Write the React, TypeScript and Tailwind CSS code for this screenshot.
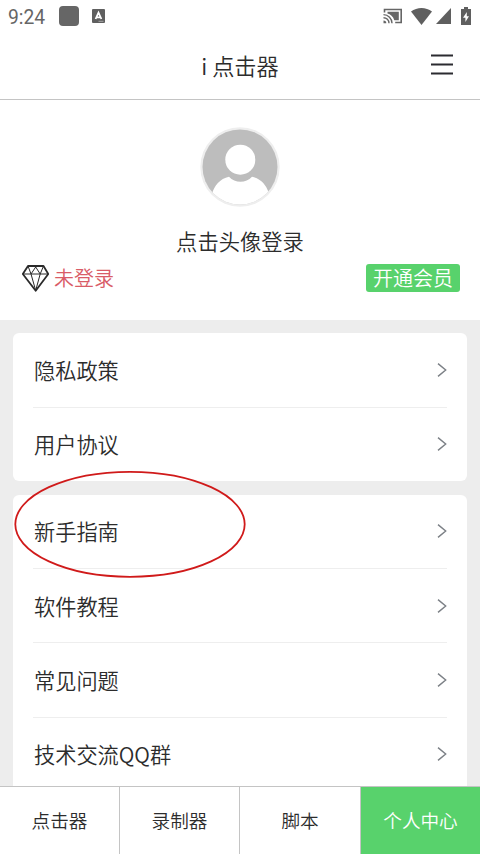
import { useState } from 'react'

const groups = [
  ['隐私政策', '用户协议'],
  ['新手指南', '软件教程', '常见问题', '技术交流QQ群'],
]

const tabs = ['点击器', '录制器', '脚本', '个人中心']

function StatusBar() {
  return (
    <div className="flex h-8 shrink-0 items-center justify-between pl-2 pr-2 text-[#666666]">
      <div className="flex items-center">
        <span className="w-[51px] pt-[3px] font-[Roboto] text-[19.3px] font-normal leading-[29px]">9:24</span>
        <span className="h-5 w-5 rounded-[4px] bg-[#666666]" />
        <svg className="ml-[13px]" width="13" height="14" viewBox="0 0 13 14">
          <rect width="13" height="14" rx="1" fill="#5f5f5f" />
          <path d="M3.6 10 6.5 3.6 9.4 10M4.8 8.3h3.4" stroke="#fff" strokeWidth="1.8" fill="none" />
          <path d="M6.5 12.3h5" stroke="#bbb" strokeWidth="0.8" />
        </svg>
      </div>
      <div className="flex items-center">
        {/* cast */}
        <svg width="20" height="16" viewBox="0 0 20 16" fill="none" stroke="#666666">
          <path d="M1.5 4.5V1.5h16.7v13h-6" strokeWidth="1.6" />
          <path d="M4.5 3.8h11.3v8.4h-4.5C10 8.5 7.5 6.2 4.5 5.6z" fill="#666666" stroke="none" />
          <path d="M.5 6.6A8.6 8.6 0 0 1 9 15.2M.5 9.7A5.5 5.5 0 0 1 6 15.2" strokeWidth="1.4" />
          <path d="M.5 12.4a2.8 2.8 0 0 1 2.8 2.8H.5z" fill="#666666" stroke="none" />
        </svg>
        {/* wifi */}
        <svg className="ml-2" width="21" height="17" viewBox="0 0 21 17">
          <path d="M0 3.6C6-1.2 15-1.2 21 3.6L10.5 17z" fill="#5f5f5f" />
        </svg>
        <svg className="ml-[4px]" width="15" height="16" viewBox="0 0 16 16" preserveAspectRatio="none">
          <path d="M16 0v16H0z" fill="#5f5f5f" />
        </svg>
        {/* battery */}
        <svg className="ml-[10px] mr-[1px]" width="10" height="18" viewBox="0 0 10 18">
          <path d="M3 0h4v2h3v16H0V2h3z" fill="#5f5f5f" />
          <path d="M5.8 5 2 10.8h2.4V15L8 9.3H5.8z" fill="#fff" />
        </svg>
      </div>
    </div>
  )
}

function Header() {
  return (
    <header className="relative flex h-[68px] shrink-0 items-center justify-center border-b border-[#c4c4c4] pb-[2px]">
      <h1 className="text-[22.2px] leading-8 text-[#2c2c2c]">i 点击器</h1>
      <button className="absolute right-[27px] top-[22px]" aria-label="menu">
        <svg width="22" height="22" viewBox="0 0 22 22" stroke="#2b2b30" strokeWidth="2">
          <path d="M0 1.5h22M0 10.5h22M0 19.5h22" />
        </svg>
      </button>
    </header>
  )
}

function Avatar() {
  return (
    <svg width="80" height="80" viewBox="0 0 80 80">
      <defs>
        <clipPath id="face">
          <circle cx="40" cy="40" r="37.5" />
        </clipPath>
      </defs>
      <circle cx="40" cy="40" r="39.7" fill="#eeeeee" />
      <g clipPath="url(#face)">
        <rect width="80" height="80" fill="#bdbdbd" />
        <path d="M12 67C14 59 20 51.5 29 49.7C35 56.5 46 56.5 52 49.7C61 51.5 66 58 68.5 65L68 80H12z" fill="#fff" />
        <circle cx="40.3" cy="32.7" r="15" fill="#fff" />
      </g>
    </svg>
  )
}

function Profile() {
  return (
    <section className="flex h-[220px] shrink-0 flex-col items-center pt-[27px]">
      <Avatar />
      <p className="mt-[18px] text-[21.3px] leading-8 text-[#2c2c2c]">点击头像登录</p>
      <div className="mt-[7px] flex w-full items-center justify-between pl-[22px] pr-5">
        <div className="flex items-center">
          <svg width="27" height="27" viewBox="0 0 27 27" fill="none" stroke="#2a2a2a" strokeLinejoin="round">
            <path d="M6 1h15.5L26.3 9 13.7 25.8.8 9z" strokeWidth="1.8" />
            <path d="M1 9h25M6 1l3 8 4.7-7 4.5 7 3.3-8M9 9l4.7 16.5L18.2 9" strokeWidth="1" />
          </svg>
          <span className="ml-[5px] text-[20px] leading-7 text-[#d95c67]">未登录</span>
        </div>
        <button className="h-7 w-[94px] rounded-[3px] bg-[#58d26c] text-[20px] leading-7 text-white">开通会员</button>
      </div>
    </section>
  )
}

export default function App() {
  const [active, setActive] = useState('个人中心')

  return (
    <div className="relative flex h-[854px] w-[480px] flex-col overflow-hidden bg-white font-['Noto_Sans_CJK_SC',sans-serif] font-[350]">
      <StatusBar />
      <Header />
      <Profile />

      <main className="flex min-h-0 flex-1 flex-col gap-[13.6px] overflow-hidden bg-[#ededed] px-[13px] pt-[13.3px]">
        {groups.map((items) => (
          <div key={items[0]} className="shrink-0 rounded-md bg-white px-5">
            {items.map((item, i) => (
              <div
                key={item}
                className={`flex items-center justify-between ${i < items.length - 1 ? 'h-[74.3px] border-b border-[#eeeeee]' : 'h-[73.6px]'}`}
              >
                <span className="ml-[1px] text-[21.2px] leading-8 text-[#2c2c2c]">{item}</span>
                <svg width="10" height="14" viewBox="0 0 10 14" fill="none" stroke="#7c8086" strokeWidth="1.4">
                  <path d="M1 .6 8.7 7 1 13.4" />
                </svg>
              </div>
            ))}
          </div>
        ))}
      </main>

      <nav className="grid h-[68px] shrink-0 grid-cols-[120px_120px_121px_1fr] border-t border-[#c4c4c4]">
        {tabs.map((tab) => (
          <button
            key={tab}
            onClick={() => setActive(tab)}
            className={`pb-px text-[18.6px] ${tab === active ? 'bg-[#58d26c] text-white' : 'border-r border-[#c4c4c4] text-[#2c2c2c]'}`}
          >
            {tab}
          </button>
        ))}
      </nav>

      {/* hand-drawn mark around the beginner guide row */}
      <svg className="pointer-events-none absolute left-[14px] top-[470px]" width="232" height="108" viewBox="0 0 232 108">
        <ellipse cx="116" cy="54.3" rx="114.7" ry="52.5" fill="none" stroke="#d01a1a" strokeWidth="1.8" />
      </svg>
    </div>
  )
}
